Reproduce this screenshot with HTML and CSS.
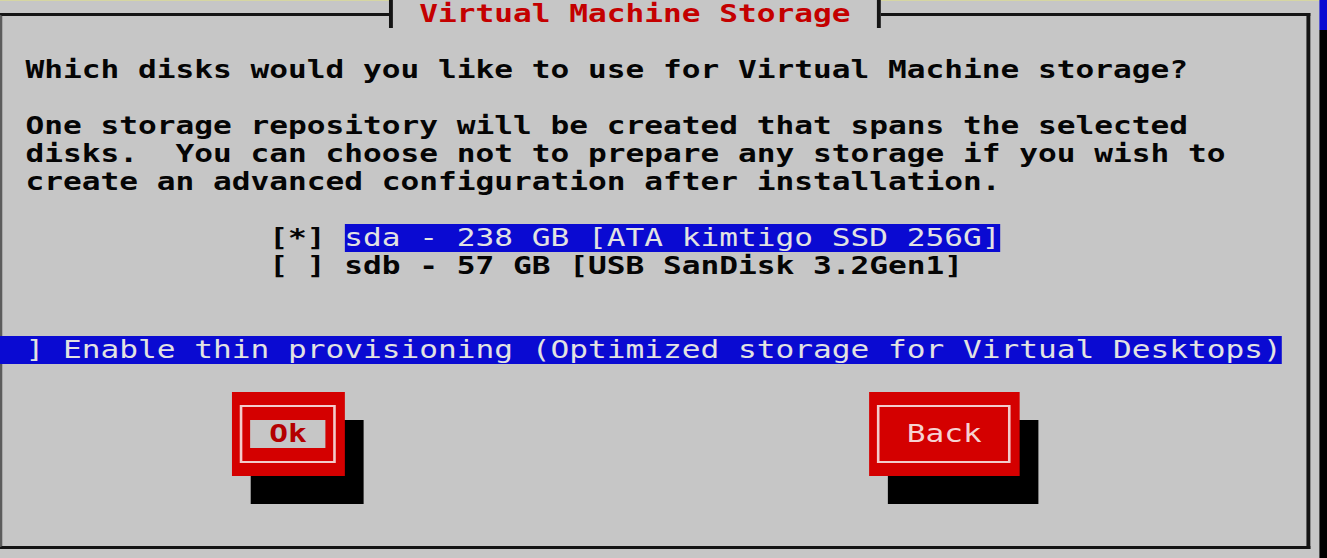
FILE: index.html
```html
<!DOCTYPE html>
<html lang="en">
<head>
<meta charset="utf-8">
<title>Virtual Machine Storage</title>
<link rel="stylesheet" href="styles.css">
</head>
<body>
<div class="screen">
  <div class="term">
    <div class="window">
      <div class="titlebar"><span class="tee">Virtual Machine Storage</span></div>
      <div class="row"></div>
      <div class="row">Which disks would you like to use for Virtual Machine storage?</div>
      <div class="row"></div>
      <div class="row">One storage repository will be created that spans the selected</div>
      <div class="row">disks.  You can choose not to prepare any storage if you wish to</div>
      <div class="row">create an advanced configuration after installation.</div>
      <div class="row"></div>
      <div class="row indent">[*] <span class="sel">sda - 238 GB [ATA kimtigo SSD 256G]</span></div>
      <div class="row indent">[ ] sdb - 57 GB [USB SanDisk 3.2Gen1]</div>
      <div class="row"></div>
      <div class="row"></div>
      <div class="row"><span class="thin">] Enable thin provisioning (Optimized storage for Virtual Desktops)</span></div>
      <div class="row"></div>
      <div class="buttons">
        <div class="btn btn-ok">
          <div class="frame"><div class="label label-focus">Ok</div></div>
        </div>
        <div class="btn btn-back">
          <div class="frame"><div class="label label-back">Back</div></div>
        </div>
      </div>
    </div>
    <div class="rshadow"></div>
  </div>
</div>
</body>
</html>
```

FILE: styles.css
```css
html, body {
  margin: 0;
  padding: 0;
  background: #c6c6c6;
  overflow: hidden;
}

.screen {
  width: 1327px;
  height: 558px;
  overflow: hidden;
  background: #c6c6c6;
  box-shadow: inset 0 1px 0 #d6d6a2;
}

.term {
  display: flex;
  align-items: flex-start;
  width: 72ch;
  margin-left: -12.5px;
  font: bold 24px/28px "DejaVu Sans Mono", monospace;
  color: #050505;
  transform: scaleX(1.29767);
  transform-origin: 0 0;
}

.window {
  box-sizing: border-box;
  flex: none;
  width: 70ch;
  height: 536px;
  margin: 13px 0 0 0.5ch;
  border: 3px solid #141414;
  border-left: 4px solid #5c5c5c;
  padding-left: calc(1.5ch - 4px);
}

.titlebar {
  height: 28px;
  margin-top: -16px;
}

.tee {
  display: inline-block;
  box-sizing: border-box;
  height: 28px;
  vertical-align: top;
  margin-left: calc(19.5ch - 1.5px);
  padding: 0 calc(1.5ch - 1.5px);
  border-left: 3px solid #141414;
  border-right: 3px solid #141414;
  background: #c6c6c6;
  color: #c40000;
  white-space: pre;
}

.row {
  height: 28px;
  white-space: pre;
}

.indent {
  padding-left: 13ch;
}

.sel {
  display: inline-block;
  height: 28px;
  vertical-align: top;
  background: #0a0ad2;
  color: #e2e2e2;
  font-weight: normal;
}

.thin {
  display: inline-block;
  box-sizing: border-box;
  width: 69ch;
  height: 28px;
  vertical-align: top;
  margin-left: -2ch;
  padding-left: 2ch;
  background: #0a0ad2;
  color: #e2e2e2;
  font-weight: normal;
}

.buttons {
  display: flex;
  align-items: flex-start;
  gap: 28ch;
  padding-left: 11ch;
}

.btn {
  box-sizing: border-box;
  flex: none;
  height: 84px;
  padding-top: 13px;
  background: #d40000;
  box-shadow: 1ch 28px 0 #000;
}

.btn-ok {
  width: 6ch;
}

.btn-back {
  width: 8ch;
}

.frame {
  box-sizing: border-box;
  height: 58px;
  margin-left: calc(0.5ch - 1px);
  width: calc(100% - 1ch + 2px);
  padding-top: 13px;
  border: 2px solid #f2cccc;
}

.label {
  height: 28px;
  margin: 0 calc(0.5ch - 1px);
  text-align: center;
  white-space: pre;
}

.label-focus {
  background: #c6c6c6;
  color: #b40000;
  font-weight: bold;
}

.label-back {
  color: #f6d2d2;
  font-weight: normal;
}

.rshadow {
  flex: none;
  width: 1ch;
  height: 558px;
  margin-left: 0.5ch;
  background: linear-gradient(#0a0ad2 0 30px, #000 30px);
}
```
